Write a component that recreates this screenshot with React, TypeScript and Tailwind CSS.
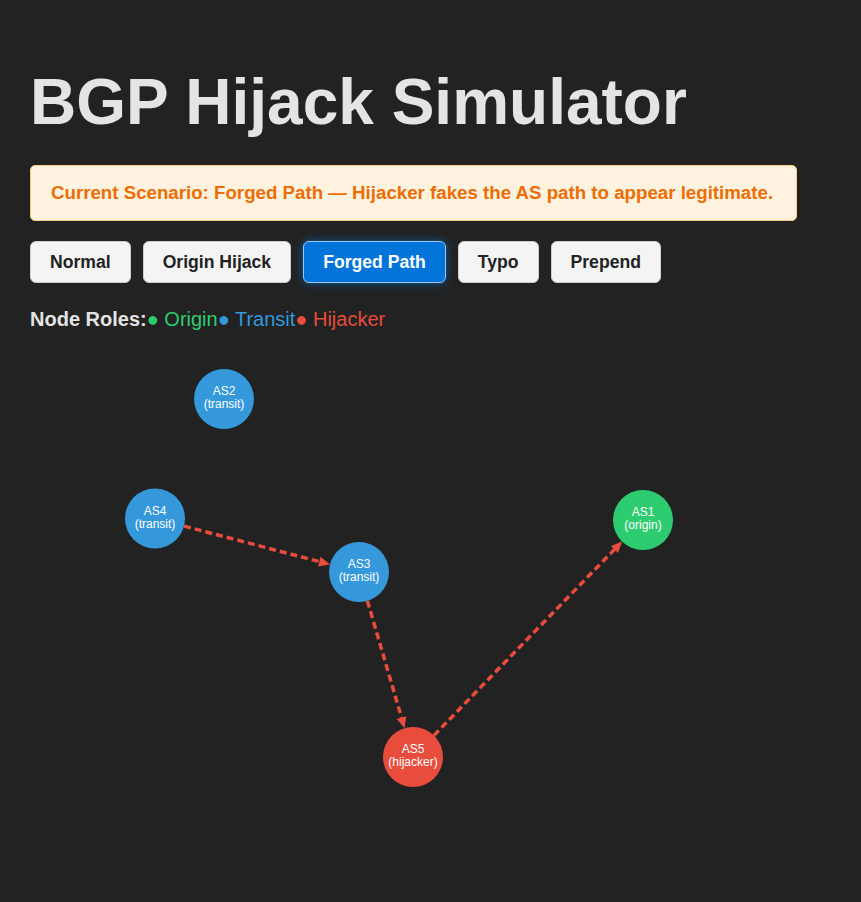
import { FC } from "react";

type Role = "origin" | "transit" | "hijacker";

interface AsNode {
  id: string;
  role: Role;
  x: number;
  y: number;
}

const roleColor: Record<Role, string> = {
  origin: "#2ecc71",
  transit: "#3498db",
  hijacker: "#e74c3c",
};

// positions are relative to the svg canvas
const nodes: AsNode[] = [
  { id: "AS1", role: "origin", x: 613, y: 169 },
  { id: "AS2", role: "transit", x: 194, y: 48 },
  { id: "AS3", role: "transit", x: 329, y: 221 },
  { id: "AS4", role: "transit", x: 125, y: 167.5 },
  { id: "AS5", role: "hijacker", x: 383, y: 406 },
];

const edges: [string, string][] = [
  ["AS4", "AS3"],
  ["AS3", "AS5"],
  ["AS5", "AS1"],
];

const scenarios = ["Normal", "Origin Hijack", "Forged Path", "Typo", "Prepend"];

const R = 30;

const Edge: FC<{ from: AsNode; to: AsNode }> = ({ from, to }) => {
  const dx = to.x - from.x;
  const dy = to.y - from.y;
  const len = Math.hypot(dx, dy);
  const ux = dx / len;
  const uy = dy / len;
  const sx = from.x + ux * R;
  const sy = from.y + uy * R;
  const tx = to.x - ux * R;
  const ty = to.y - uy * R;
  const bx = tx - ux * 11;
  const by = ty - uy * 11;
  const nx = -uy * 5;
  const ny = ux * 5;
  return (
    <g>
      <line
        x1={sx}
        y1={sy}
        x2={bx + ux}
        y2={by + uy}
        stroke="#e74c3c"
        strokeWidth={3.5}
        strokeDasharray="7 4"
      />
      <polygon
        points={`${tx},${ty} ${bx + nx},${by + ny} ${bx - nx},${by - ny}`}
        fill="#e74c3c"
      />
    </g>
  );
};

const App = () => {
  const active = "Forged Path";
  const byId = (id: string) => nodes.find((n) => n.id === id)!;

  return (
    <div className="min-h-screen bg-[#222222] px-[30px] pt-[65px] font-['Liberation_Sans',Arial,sans-serif] leading-[normal]">
      <h1 className="mb-[26px] text-[64px] font-bold leading-[normal] text-[#e4e4e4]">
        BGP Hijack Simulator
      </h1>

      {/* scenario banner */}
      <div className="w-[767px] rounded-[5px] border border-[#ffcc80] bg-[#fff3e0] px-5 py-4 text-[18.7px] font-bold leading-[normal] text-[#ef6c00]">
        Current Scenario: Forged Path — Hijacker fakes the AS path to appear legitimate.
      </div>

      <div className="mt-5 flex gap-3">
        {scenarios.map((s) =>
          s === active ? (
            <button
              key={s}
              className="rounded-[6px] border border-[#9cc8f0] bg-[#0074d9] px-[19px] py-[9.5px] text-[17.6px] font-bold leading-[normal] text-white shadow-[0_0_8px_rgba(0,116,217,0.7)]"
            >
              {s}
            </button>
          ) : (
            <button
              key={s}
              className="rounded-[6px] border border-[#cccccc] bg-[#f4f4f4] px-[19px] py-[9.5px] text-[17.6px] font-bold leading-[normal] text-[#222222]"
            >
              {s}
            </button>
          )
        )}
      </div>

      <div className="mt-[24.5px] text-[20px] leading-[normal]">
        <strong className="font-bold text-[#e4e4e4]">Node Roles:</strong>
        <span className="text-[#2ecc71]">● Origin</span>
        <span className="text-[#3498db]">● Transit</span>
        <span className="text-[#e74c3c]">● Hijacker</span>
      </div>

      <svg width={767} height={480} className="mt-[20px] block">
        {edges.map(([a, b]) => (
          <Edge key={a + b} from={byId(a)} to={byId(b)} />
        ))}
        {nodes.map((n) => (
          <g key={n.id}>
            <circle cx={n.x} cy={n.y} r={R} fill={roleColor[n.role]} />
            <text
              x={n.x}
              y={n.y - 3.7}
              textAnchor="middle"
              fontSize={12}
              fill="#ffffff"
              fontFamily="'Liberation Sans', Arial, sans-serif"
            >
              {n.id}
            </text>
            <text
              x={n.x}
              y={n.y + 9}
              textAnchor="middle"
              fontSize={12}
              fill="#ffffff"
              fontFamily="'Liberation Sans', Arial, sans-serif"
            >
              ({n.role})
            </text>
          </g>
        ))}
      </svg>
    </div>
  );
};

export default App;
